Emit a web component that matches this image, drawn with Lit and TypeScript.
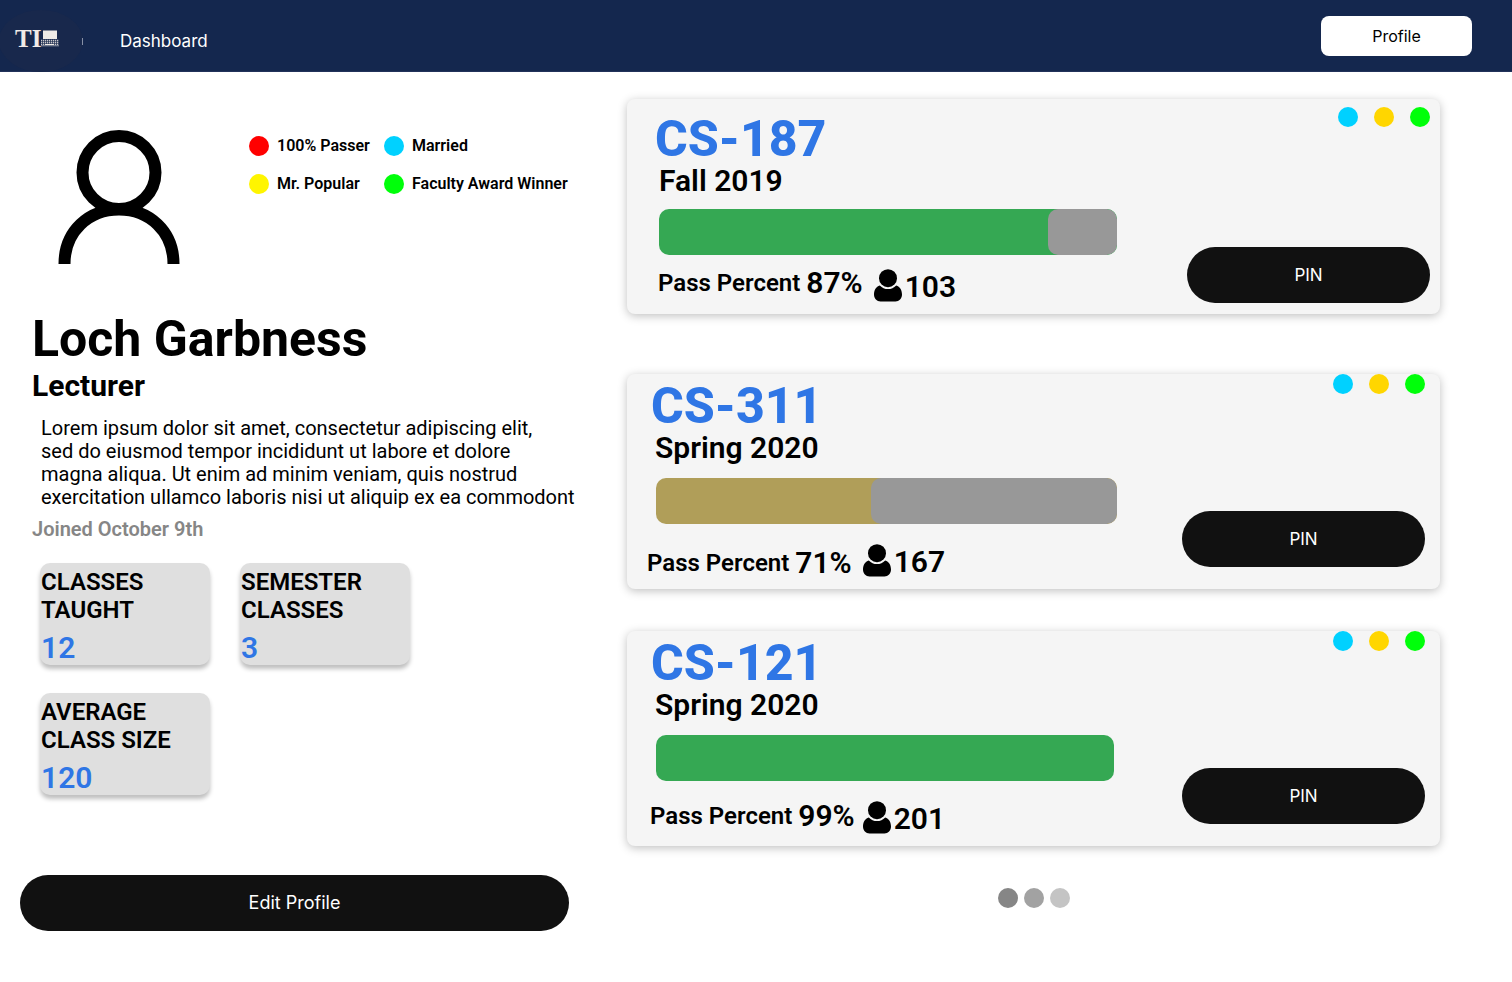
import { LitElement, html, css, svg } from "lit";
import { customElement, property } from "lit/decorators.js";

interface Course {
  code: string;
  term: string;
  pass: number;
  students: number;
  rest: number;
  tone: "good" | "fair";
  layout: string;
}

const courses: Course[] = [
  { code: "CS-187", term: "Fall 2019", pass: 87, students: 103, rest: 15, tone: "good", layout: "roomy" },
  { code: "CS-311", term: "Spring 2020", pass: 71, students: 167, rest: 53.4, tone: "fair", layout: "wide" },
  { code: "CS-121", term: "Spring 2020", pass: 99, students: 201, rest: 0, tone: "good", layout: "plain" },
];

const stats = [
  { lines: ["CLASSES", "TAUGHT"], value: 12 },
  { lines: ["SEMESTER", "CLASSES"], value: 3 },
  { lines: ["AVERAGE", "CLASS SIZE"], value: 120 },
];

const badges = [
  { label: "100% Passer", tone: "red" },
  { label: "Married", tone: "cyan" },
  { label: "Mr. Popular", tone: "yellow" },
  { label: "Faculty Award Winner", tone: "green" },
];

const shared = css`
  * {
    box-sizing: border-box;
  }
  h1, h2, h3, p, ul, dl, dt, dd {
    margin: 0;
    padding: 0;
  }
  ul {
    list-style: none;
  }
  .pill {
    height: 56px;
    padding: 0;
    border: 0;
    border-radius: 28px;
    background: #111111;
    color: #ffffff;
    font: 400 18px/28px Inter, sans-serif;
    cursor: pointer;
  }
  .dot {
    display: block;
    flex: none;
    width: 20px;
    height: 20px;
    border-radius: 50%;
  }
  .red { background: #ff0000; }
  .cyan { background: #00d1ff; }
  .yellow { background: #fff500; }
  .gold { background: #ffd600; }
  .green { background: #00ff0a; }
`;

@customElement("site-header")
export class SiteHeader extends LitElement {
  static styles = [
    shared,
    css`
      :host {
        display: block;
      }
      .bar {
        display: flex;
        align-items: center;
        height: 72px;
        padding-right: 40px;
        background: #14274e;
        border-bottom: 1px solid #22325a;
      }
      .logo {
        display: block;
        width: 83px;
        height: 72px;
      }
      .nav {
        flex: 1;
        padding: 10px 0 0 37px;
      }
      .link {
        color: #ffffff;
        font: 400 17px/24px Inter, sans-serif;
        text-decoration: none;
      }
      .profile {
        width: 151px;
        height: 40px;
        padding: 0;
        border: 0;
        border-radius: 8px;
        background: #ffffff;
        color: #000000;
        font: 400 16px/24px Inter, sans-serif;
        cursor: pointer;
      }
    `,
  ];

  render() {
    const keys = [40, 42, 44].map((y) =>
      svg`<path d="M41 ${y + 0.5}H59" stroke="#c9c8cb" stroke-width="1.3" stroke-dasharray="1.3 .7"/>`
    );
    return html`
      <header class="bar">
        <svg class="logo" viewBox="0 0 83 72" role="img" aria-label="TI">
          <ellipse cx="41" cy="41" rx="42" ry="31" fill="#18284c" />
          <text x="15" y="47" fill="#f1ebe8" font-family="Liberation Serif, serif" font-weight="700" font-size="25">TI</text>
          <rect x="43" y="30.500" width="14" height="8.500" fill="#efebe6" />
          ${keys}
          <path d="M41 45.800H59" stroke="#8d93a4" stroke-width="1" />
          <path d="M45 44.500H54" stroke="#efebe6" stroke-width="1" />
          <path d="M82.500 38V45" stroke="#8790a6" stroke-width="1" />
        </svg>
        <nav class="nav"><a class="link" href="#dashboard">Dashboard</a></nav>
        <button class="profile" type="button">Profile</button>
      </header>
    `;
  }
}

@customElement("course-card")
export class CourseCard extends LitElement {
  @property({ attribute: false }) course!: Course;

  static styles = [
    shared,
    css`
      :host {
        display: block;
      }
      .card {
        display: flex;
        justify-content: space-between;
        min-height: 215px;
        border-radius: 8px;
        background: #f5f5f5;
        box-shadow: 0 2px 10px rgba(0, 0, 0, 0.25);
      }
      .roomy {
        --top: 15px;
        --left: 28px;
        --bar-gap: 11px;
        --bar-left: 4px;
        --meta-gap: 10px;
        --meta-left: 3px;
        --count-top: 4px;
        --count-left: 11px;
        --side: 8px 10px 11px 0;
      }
      .wide {
        --top: 7px;
        --left: 24px;
        --bar-gap: 13px;
        --bar-left: 5px;
        --meta-gap: 21px;
        --meta-left: -4px;
        --count-top: -1px;
        --count-left: 11px;
        --side: 0 15px 22px 0;
      }
      .plain {
        --top: 7px;
        --left: 24px;
        --bar-gap: 13px;
        --bar-left: 5px;
        --meta-gap: 17px;
        --meta-left: -1px;
        --count-top: 3px;
        --count-left: 8px;
        --side: 0 15px 22px 0;
      }
      .info {
        padding: var(--top) 0 0 var(--left);
        font-family: Roboto, sans-serif;
        color: #000000;
      }
      .code {
        font-size: 50px;
        line-height: 50px;
        font-weight: 800;
        color: #2f76e5;
      }
      .term {
        padding-left: 4px;
        font-size: 30px;
        line-height: 34px;
        font-weight: 600;
      }
      .track {
        display: flex;
        justify-content: flex-end;
        width: 458px;
        height: 46px;
        margin: var(--bar-gap) 0 0 var(--bar-left);
        border-radius: 10px;
        overflow: hidden;
      }
      .wide .track {
        width: 461px;
      }
      .good { background: #35a853; }
      .fair { background: #b09e59; }
      .rest {
        height: 100%;
        border-radius: 10px;
        background: #989898;
      }
      .meta {
        display: flex;
        align-items: flex-start;
        margin: var(--meta-gap) 0 0 var(--meta-left);
        font-size: 30px;
        line-height: 36px;
        font-weight: 600;
      }
      .label {
        font-size: 24px;
        margin-right: 6px;
      }
      .count {
        display: flex;
        gap: 3px;
        margin: var(--count-top) 0 0 var(--count-left);
      }
      .person {
        width: 28px;
        height: 33px;
      }
      .side {
        display: flex;
        flex-direction: column;
        justify-content: space-between;
        align-items: flex-end;
        padding: var(--side);
      }
      .dots {
        display: flex;
        gap: 16px;
      }
      .pin {
        width: 243px;
        font-size: 17px;
      }
    `,
  ];

  render() {
    const c = this.course;
    return html`
      <article class="card ${c.layout}">
        <div class="info">
          <h2 class="code">${c.code}</h2>
          <p class="term">${c.term}</p>
          <div class="track ${c.tone}">
            <div class="rest" style="width:${c.rest}%"></div>
          </div>
          <div class="meta">
            <span class="label">Pass Percent</span>
            <span>${c.pass}%</span>
            <span class="count">
              <svg class="person" viewBox="0 0 28 33" aria-hidden="true">
                <circle cx="14" cy="9.200" r="9" />
                <path d="M5.800 16.400c2.300 2.400 5 3.600 8.200 3.600s5.900-1.200 8.200-3.600c3.800 1.100 5.800 4.600 5.800 9.100 0 4-2.900 6.900-6.500 6.900h-15C2.900 32.400 0 29.500 0 25.500c0-4.500 2-8 5.800-9.100z" />
              </svg>
              <span>${c.students}</span>
            </span>
          </div>
        </div>
        <div class="side">
          <div class="dots">
            <span class="dot cyan"></span>
            <span class="dot gold"></span>
            <span class="dot green"></span>
          </div>
          <button class="pill pin" type="button">PIN</button>
        </div>
      </article>
    `;
  }
}

@customElement("profile-panel")
export class ProfilePanel extends LitElement {
  static styles = [
    shared,
    css`
      :host {
        display: block;
        font-family: Roboto, sans-serif;
        color: #000000;
      }
      .top {
        display: flex;
        gap: 69px;
        padding: 31px 0 0 38px;
      }
      .avatar {
        flex: none;
        width: 122px;
        height: 134px;
      }
      .badges {
        display: grid;
        grid-template-columns: 127px auto;
        align-content: start;
        gap: 18px 8px;
        padding-top: 6px;
      }
      .badge {
        display: flex;
        gap: 8px;
        font-size: 16px;
        line-height: 20px;
        font-weight: 600;
        white-space: nowrap;
      }
      .about {
        padding: 46px 0 0 12px;
      }
      .name {
        font-size: 50px;
        line-height: 59px;
        font-weight: 700;
      }
      .role {
        font-size: 30px;
        line-height: 34px;
        font-weight: 700;
      }
      .bio {
        padding: 14px 0 9px 9px;
        font-size: 20px;
        line-height: 23px;
        white-space: nowrap;
      }
      .joined {
        font-size: 20px;
        line-height: 23px;
        font-weight: 600;
        color: #868686;
      }
      .stats {
        display: grid;
        grid-template-columns: 170px 170px;
        gap: 28px 30px;
        padding: 22px 0 80px 20px;
      }
      .stat {
        padding: 5px 0 0 1px;
        border-radius: 10px;
        background: #dfdfdf;
        box-shadow: 0 4px 4px rgba(0, 0, 0, 0.25);
      }
      .stat dt {
        padding-bottom: 6px;
        font-size: 24px;
        line-height: 28px;
        font-weight: 600;
      }
      .stat dd {
        font-size: 30px;
        line-height: 35px;
        font-weight: 600;
        color: #2f76e5;
      }
      .edit {
        width: 100%;
      }
    `,
  ];

  render() {
    return html`
      <div class="top">
        <svg class="avatar" viewBox="0 0 122 134" fill="none" stroke="#000" stroke-width="12" role="img" aria-label="Profile picture">
          <circle cx="61" cy="42.500" r="36.500" />
          <path d="M6.500 134C6.500 101 31 79.500 61 79.500S115.500 101 115.500 134" />
        </svg>
        <ul class="badges">
          ${badges.map((b) => html`<li class="badge"><span class="dot ${b.tone}"></span>${b.label}</li>`)}
        </ul>
      </div>
      <div class="about">
        <h1 class="name">Loch Garbness</h1>
        <p class="role">Lecturer</p>
        <p class="bio">
          Lorem ipsum dolor sit amet, consectetur adipiscing elit,<br />
          sed do eiusmod tempor incididunt ut labore et dolore<br />
          magna aliqua. Ut enim ad minim veniam, quis nostrud<br />
          exercitation ullamco laboris nisi ut aliquip ex ea commodont
        </p>
        <p class="joined">Joined October 9th</p>
      </div>
      <dl class="stats">
        ${stats.map(
          (s) => html`<div class="stat"><dt>${s.lines[0]}<br />${s.lines[1]}</dt><dd>${s.value}</dd></div>`
        )}
      </dl>
      <button class="pill edit" type="button">Edit Profile</button>
    `;
  }
}

@customElement("app-root")
export class AppRoot extends LitElement {
  static styles = [
    shared,
    css`
      :host {
        display: block;
        min-height: 100vh;
        background: #ffffff;
      }
      .page {
        display: grid;
        grid-template-columns: 549px minmax(0, 1fr);
        gap: 58px;
        padding: 27px 72px 50px 20px;
      }
      .courses {
        display: flex;
        flex-direction: column;
      }
      .second {
        margin-top: 60px;
      }
      .third {
        margin-top: 42px;
      }
      .pager {
        display: flex;
        justify-content: center;
        gap: 6px;
        padding-top: 42px;
      }
      .step {
        padding: 0;
        border: 0;
        cursor: pointer;
      }
      .dark { background: #868686; }
      .mid { background: #a2a2a2; }
      .light { background: #c4c4c4; }
    `,
  ];

  render() {
    return html`
      <site-header></site-header>
      <main class="page">
        <profile-panel></profile-panel>
        <section class="courses" aria-label="Classes">
          <course-card .course=${courses[0]}></course-card>
          <course-card class="second" .course=${courses[1]}></course-card>
          <course-card class="third" .course=${courses[2]}></course-card>
          <div class="pager">
            <button class="dot step dark" type="button" aria-label="Page 1"></button>
            <button class="dot step mid" type="button" aria-label="Page 2"></button>
            <button class="dot step light" type="button" aria-label="Page 3"></button>
          </div>
        </section>
      </main>
    `;
  }
}
